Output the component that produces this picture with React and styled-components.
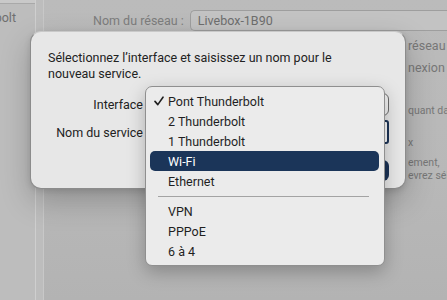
import React from "react";
import styled, { createGlobalStyle } from "styled-components";

const Global = createGlobalStyle`
  html, body { margin: 0; padding: 0; }
  body {
    width: 447px;
    height: 300px;
    overflow: hidden;
    background: #b7b7b7;
    font-family: Roboto, "Liberation Sans", sans-serif;
    -webkit-font-smoothing: antialiased;
  }
`;

const Window = styled.div`
  position: relative;
  width: 447px;
  height: 300px;
  display: flex;
  overflow: hidden;
  background: linear-gradient(180deg, #bbbbbb 0%, #b8b8b8 60%, #b3b3b3 100%);
`;

const Sidebar = styled.div`
  width: 35px;
  flex: none;
  overflow: hidden;
  background: #bdbdbd;
  border-right: 1px solid #cfcfcf;
  display: flex;
  flex-direction: column;
`;

const SidebarSelected = styled.div`
  height: 3px;
  background: #c9c9c9;
  border-bottom: 1px solid #a9a9a9;
`;

const SidebarLabel = styled.div`
  display: flex;
  justify-content: flex-end;
  padding-right: 19px;
  margin-top: 7px;
  font-size: 12.5px;
  color: #6f6f6f;
  line-height: 14px;
  white-space: nowrap;
`;

const Gutter = styled.div`
  width: 7px;
  flex: none;
  background: #bdbdbd;
  border-right: 1px solid #c8c8c8;
`;

const Main = styled.div`
  flex: 1;
  display: flex;
  flex-direction: column;
  padding-top: 10px;
`;

const FieldRow = styled.div`
  display: flex;
  align-items: center;
  gap: 6px;
  padding-left: 49px;
`;

const Label = styled.span`
  font-size: 12.5px;
  color: #7d7d7d;
  white-space: nowrap;
`;

const Field = styled.div`
  flex: 1;
  height: 19px;
  display: flex;
  align-items: center;
  padding-left: 7px;
  background: #c3c3c3;
  border: 1px solid #9e9e9e;
  border-right: none;
  border-radius: 5px 0 0 5px;
  font-size: 12.5px;
  color: #6e6e6e;
`;

const RightNotes = styled.div`
  margin-left: 364px;
  display: flex;
  flex-direction: column;
  color: #777;
  white-space: nowrap;
`;

const Note = styled.div`
  font-size: ${({ small }) => (small ? "10.5px" : "12.5px")};
  line-height: ${({ small }) => (small ? "13px" : "22px")};
  margin-top: ${({ gap }) => gap || 0}px;
`;

const Sheet = styled.div`
  position: absolute;
  left: 30px;
  top: 31px;
  width: 376px;
  height: 158px;
  box-sizing: border-box;
  background: #e7e7e7;
  border: 1px solid #8c8c8c;
  border-top-color: #c9c9c9;
  border-radius: 11px;
  box-shadow: 0 12px 30px rgba(0, 0, 0, 0.22), 0 2px 6px rgba(0, 0, 0, 0.12);
  padding: 18px 16px 0 17px;
  display: flex;
  flex-direction: column;
`;

const Prompt = styled.p`
  margin: 0;
  font-size: 12.5px;
  line-height: 15.5px;
  color: #222;
`;

const Form = styled.div`
  margin-top: 12px;
  display: grid;
  grid-template-columns: 95px 1fr;
  column-gap: 8px;
  row-gap: 4px;
  align-items: center;
`;

const FormLabel = styled.span`
  text-align: right;
  font-size: 12.5px;
  color: #222;
  white-space: nowrap;
`;

const Popup = styled.div`
  height: 21px;
  border-radius: 6px;
  border: 1px solid #6c6c6c;
  background: #f3f3f3;
`;

const TextInput = styled.div`
  height: 20px;
  border: 2px solid #1c3356;
  border-radius: 3px;
  background: #fafafa;
`;

const Buttons = styled.div`
  margin-top: 16px;
  display: flex;
  justify-content: flex-end;
`;

const Button = styled.div`
  width: 80px;
  height: 21px;
  border-radius: 6px;
  background: ${({ primary }) => (primary ? "#1c3356" : "#f5f5f5")};
`;

const Menu = styled.div`
  position: absolute;
  left: 145px;
  top: 86px;
  width: 240px;
  box-sizing: border-box;
  padding: 4px 5px 4px 4px;
  background: #ebebeb;
  border: 1px solid #8f8f8f;
  border-radius: 7px;
  box-shadow: 0 6px 18px rgba(0, 0, 0, 0.25);
  display: flex;
  flex-direction: column;
`;

const Item = styled.div`
  height: 20px;
  display: flex;
  align-items: center;
  padding-left: 18px;
  position: relative;
  border-radius: 5px;
  font-size: 12.5px;
  color: ${({ active }) => (active ? "#fff" : "#1f1f1f")};
  background: ${({ active }) => (active ? "#1b3559" : "transparent")};
`;

const Check = styled.svg`
  position: absolute;
  left: 4px;
  top: 5px;
  width: 10px;
  height: 10px;
`;

const Separator = styled.div`
  height: 1px;
  margin: 5px 10px 4px 8px;
  background: #a3a3a3;
`;

const items = ["Pont Thunderbolt", "2 Thunderbolt", "1 Thunderbolt", "Wi-Fi", "Ethernet"];
const others = ["VPN", "PPPoE", "6 à 4"];

export default function App() {
  return (
    <>
      <Global />
      <Window>
        <Sidebar>
          <SidebarSelected />
          <SidebarLabel>Thunderbolt</SidebarLabel>
        </Sidebar>
        <Gutter />
        <Main>
          <FieldRow>
            <Label>Nom du réseau :</Label>
            <Field>Livebox-1B90</Field>
          </FieldRow>
          <RightNotes>
            <Note gap={4}>réseau</Note>
            <Note>nexion</Note>
            <Note small gap={25}>quant dan</Note>
            <Note small gap={19}>x</Note>
            <Note small gap={7}>ement,</Note>
            <Note small>evrez sél</Note>
          </RightNotes>
        </Main>

        <Sheet>
          <Prompt>
            Sélectionnez l’interface et saisissez un nom pour le
            <br />
            nouveau service.
          </Prompt>
          <Form>
            <FormLabel>Interface</FormLabel>
            <Popup />
            <FormLabel>Nom du service</FormLabel>
            <TextInput />
          </Form>
          <Buttons>
            <Button primary />
          </Buttons>
        </Sheet>

        <Menu>
          {items.map((name, i) => (
            <Item key={name} active={name === "Wi-Fi"}>
              {i === 0 && (
                <Check viewBox="0 0 10 10">
                  <path d="M1 5.4 L3.8 8.6 L9 1.2" fill="none" stroke="#1f1f1f" strokeWidth="1.6" strokeLinecap="round" strokeLinejoin="round" />
                </Check>
              )}
              {name}
            </Item>
          ))}
          <Separator />
          {others.map((name) => (
            <Item key={name}>{name}</Item>
          ))}
        </Menu>
      </Window>
    </>
  );
}
